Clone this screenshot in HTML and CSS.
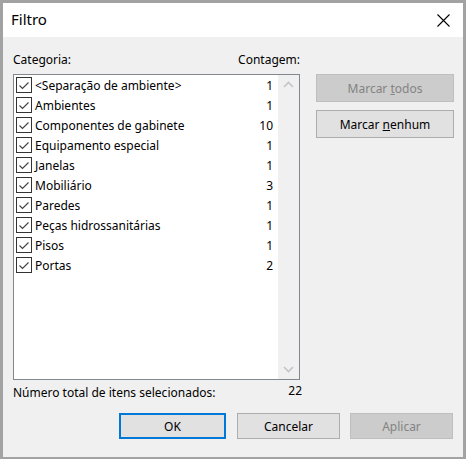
FILE: index.html
```html
<!DOCTYPE html>
<html lang="pt">
<head>
<meta charset="utf-8">
<title>Filtro</title>
<link rel="stylesheet" href="styles.css">
</head>
<body>
<div class="window">
  <div class="titlebar">
    <span class="title">Filtro</span>
    <span class="close">
      <svg width="13" height="13" viewBox="0 0 13 13"><path d="M0.5 0.5 L12.5 12.5 M12.5 0.5 L0.5 12.5" stroke="#000" stroke-width="1.1" fill="none"/></svg>
    </span>
  </div>
  <div class="content">
    <div class="main">
      <div class="left">
        <div class="labels"><span>Categoria:</span><span class="lbl-count">Contagem:</span></div>
        <div class="listbox">
          <div class="items">
            <div class="row"><span class="cb"></span><span class="name">&lt;Separação de ambiente&gt;</span><span class="count">1</span></div>
            <div class="row"><span class="cb"></span><span class="name">Ambientes</span><span class="count">1</span></div>
            <div class="row"><span class="cb"></span><span class="name">Componentes de gabinete</span><span class="count">10</span></div>
            <div class="row"><span class="cb"></span><span class="name">Equipamento especial</span><span class="count">1</span></div>
            <div class="row"><span class="cb"></span><span class="name">Janelas</span><span class="count">1</span></div>
            <div class="row"><span class="cb"></span><span class="name">Mobiliário</span><span class="count">3</span></div>
            <div class="row"><span class="cb"></span><span class="name">Paredes</span><span class="count">1</span></div>
            <div class="row"><span class="cb"></span><span class="name">Peças hidrossanitárias</span><span class="count">1</span></div>
            <div class="row"><span class="cb"></span><span class="name">Pisos</span><span class="count">1</span></div>
            <div class="row"><span class="cb"></span><span class="name">Portas</span><span class="count">2</span></div>
          </div>
          <div class="scrollbar">
            <svg width="21" height="20" viewBox="0 0 21 20"><path d="M6 12 L10.5 7.5 L15 12" stroke="#c4c4c4" stroke-width="1.6" fill="none"/></svg>
            <svg width="21" height="20" viewBox="0 0 21 20"><path d="M6 8 L10.5 12.5 L15 8" stroke="#c4c4c4" stroke-width="1.6" fill="none"/></svg>
          </div>
        </div>
        <div class="total"><span>Número total de itens selecionados:</span><span class="total-num">22</span></div>
      </div>
      <div class="side">
        <button class="btn disabled">Marcar <u>t</u>odos</button>
        <button class="btn">Marcar <u>n</u>enhum</button>
      </div>
    </div>
    <div class="footer">
      <button class="btn default">OK</button>
      <button class="btn">Cancelar</button>
      <button class="btn disabled">Aplicar</button>
    </div>
  </div>
</div>
</body>
</html>
```

FILE: styles.css
```css
* { box-sizing: border-box; }
html, body { margin: 0; padding: 0; }
body {
  font-family: "Noto Sans", "Open Sans", sans-serif;
  font-size: 12px;
  color: #000;
  background: #f0f0f0;
}
.window {
  width: 466px;
  height: 459px;
  border-style: solid;
  border-color: #a2a2a2;
  border-width: 3px 3px 2px 3px;
  background: #f0f0f0;
  display: flex;
  flex-direction: column;
}
.titlebar {
  height: 34px;
  background: #fff;
  display: flex;
  align-items: center;
  justify-content: space-between;
  padding: 0 13px 2px 8px;
}
.title { font-size: 15px; }
.close { display: flex; padding-top: 2px; }
.content {
  flex: 1;
  display: flex;
  flex-direction: column;
  padding: 15px 10px 0 10px;
}
.main {
  display: flex;
  gap: 14px;
}
.left { width: 292px; }
.labels {
  display: flex;
  height: 22px;
  line-height: 16px;
  width: 287px;
}
.lbl-count { margin-left: auto; }
.listbox {
  width: 287px;
  height: 306px;
  border: 1px solid #828790;
  background: #fff;
  display: flex;
}
.items {
  flex: 1;
  padding-top: 0;
}
.row {
  height: 20px;
  display: flex;
  align-items: center;
  padding-left: 2px;
  padding-right: 5px;
}
.cb {
  width: 16px;
  height: 16px;
  border: 1px solid #333;
  background: #fff url("data:image/svg+xml;utf8,<svg xmlns='http://www.w3.org/2000/svg' width='14' height='14' viewBox='0 0 14 14'><path d='M2.5 7.5 L5.5 10.5 L11.5 4.5' stroke='%23444' stroke-width='1.2' fill='none'/></svg>") no-repeat center;
  margin-right: 3px;
  flex: none;
}
.name { flex: 1; white-space: nowrap; }
.count { text-align: right; }
.scrollbar {
  width: 21px;
  background: #f0f0f0;
  display: flex;
  flex-direction: column;
  justify-content: space-between;
}
.scrollbar svg { display: block; }
.total {
  display: flex;
  justify-content: space-between;
  width: 289px;
  margin-top: 5px;
  line-height: 16px;
}
.total-num { position: relative; top: -2px; }
.side {
  display: flex;
  flex-direction: column;
  gap: 8px;
  padding-top: 22px;
}
.btn {
  font-family: inherit;
  font-size: 12px;
  width: 138px;
  height: 28px;
  background: #e1e1e1;
  border: 1px solid #adadad;
  color: #000;
  padding: 0;
  margin: 0;
}
.btn.disabled {
  background: #cccccc;
  border-color: #bfbfbf;
  color: #838383;
}
.footer {
  display: flex;
  justify-content: flex-end;
  gap: 10px;
  margin-top: 12px;
}
.footer .btn {
  width: 103px;
  height: 26px;
}
.footer .btn.default {
  width: 107px;
  border: 2px solid #0078d7;
  margin-right: 1px;
}
```
